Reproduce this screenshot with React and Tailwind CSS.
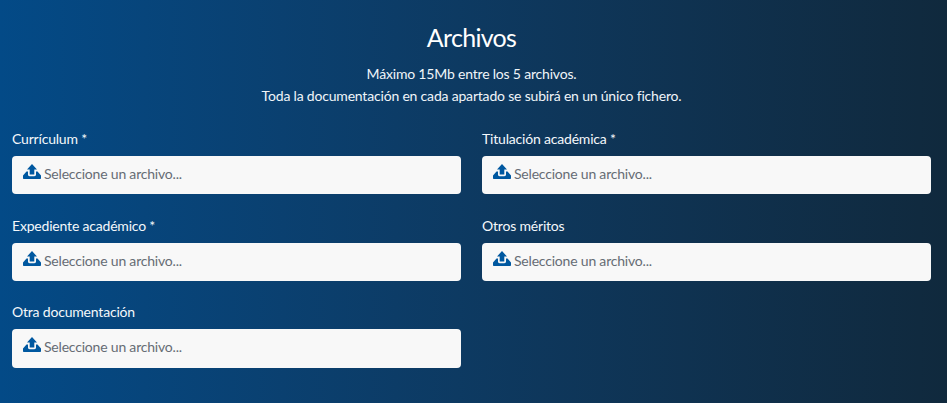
const Icon = () => (
  <svg viewBox="0 0 18 15" className="w-[18px] h-[15px] shrink-0 self-start mt-[8px] text-[#0058a0]" fill="currentColor">
    <path d="M9 0 L14 5.5 H11.3 V10.5 H6.7 V5.5 H4 Z" />
    <path d="M0 11.5 L3.5 7.5 H5 V10.5 C5 11.5 5.7 12.2 6.7 12.2 H11.3 C12.3 12.2 13 11.5 13 10.5 V7.5 H14.5 L18 11.5 V14 C18 14.6 17.6 15 17 15 H1 C.4 15 0 14.6 0 14 Z" />
  </svg>
);

const Field = ({ label }) => (
  <div>
    <div className="text-[14px] leading-[20px] tracking-[-0.19px] text-[#f4f8fb] mb-[7px]">{label}</div>
    <div className="h-[38.4px] bg-[#f8f8f8] rounded-[4px] flex items-center pl-[11px] pb-[3px] gap-[3px]">
      <Icon />
      <span className="text-[14px] tracking-[-0.2px] text-[#666c74]">Seleccione un archivo...</span>
    </div>
  </div>
);

export default function App() {
  return (
    <div
      className="w-[947px] h-[403px] overflow-hidden bg-gradient-to-r from-[#034a87] to-[#10293d] pl-[12px] pr-[16px] pt-[21px] text-white"
      style={{ fontFamily: 'Lato, "Noto Sans", sans-serif' }}
    >
      <h1 className="text-center text-[25px] leading-[32px] tracking-[-0.7px] font-normal">Archivos</h1>
      <div className="mt-[10px] text-center text-[14px] leading-[22px] tracking-[-0.19px] text-[#f0f5f9]">
        <p>Máximo 15Mb entre los 5 archivos.</p>
        <p>Toda la documentación en cada apartado se subirá en un único fichero.</p>
      </div>
      <div className="mt-[22px] grid grid-cols-2 gap-x-[21px] gap-y-[21.2px]">
        <Field label="Currículum *" />
        <Field label="Titulación académica *" />
        <Field label="Expediente académico *" />
        <Field label="Otros méritos" />
        <Field label="Otra documentación" />
      </div>
    </div>
  );
}
